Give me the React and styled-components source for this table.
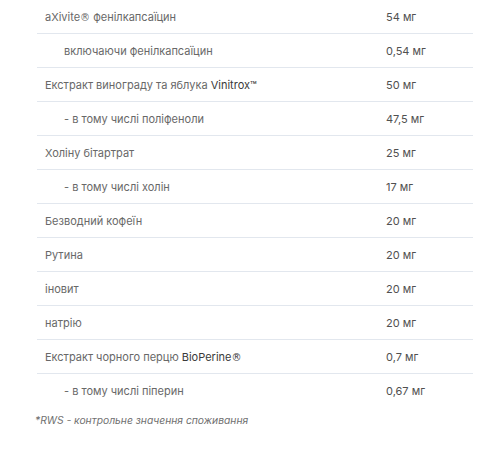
import styled, { createGlobalStyle } from "styled-components";

const GlobalStyle = createGlobalStyle`
  body {
    margin: 0;
    background: #fff;
    font-family: Inter, Roboto, "Liberation Sans", sans-serif;
  }
`;

const Wrapper = styled.div`
  width: 500px;
  height: 450px;
  padding: 0 27px 0 35px;
  box-sizing: border-box;
`;

const Table = styled.div`
  display: flex;
  flex-direction: column;
  margin-left: 2px;
`;

const Row = styled.div`
  display: grid;
  grid-template-columns: 1fr 87px;
  align-items: center;
  height: 33px;
  border-bottom: 1px solid ${(p) => (p.last ? "transparent" : "#e2e7ee")};
`;

const Name = styled.span`
  padding-left: ${(p) => (p.sub ? 27 : 8)}px;
  font-size: 11px;
  color: #686868;
  white-space: nowrap;
`;

const Brand = styled.span`
  color: #3a3a3a;
`;

const Reg = styled.span`
  font-family: "DejaVu Sans", sans-serif;
  font-size: 10px;
`;

const Amount = styled.span`
  font-size: 11px;
  color: #505050;
`;

const Note = styled.p`
  margin: 6px 0 0;
  font-size: 10.3px;
  font-style: italic;
  color: #707070;
`;

const rows = [
  { name: "aXivite", reg: true, rest: " фенілкапсаїцин", amount: "54 мг" },
  { name: "включаючи фенілкапсаїцин", amount: "0,54 мг", sub: true },
  { name: "Екстракт винограду та яблука ", brand: "Vinitrox™", amount: "50 мг" },
  { name: "- в тому числі поліфеноли", amount: "47,5 мг", sub: true },
  { name: "Холіну бітартрат", amount: "25 мг" },
  { name: "- в тому числі холін", amount: "17 мг", sub: true },
  { name: "Безводний кофеїн", amount: "20 мг" },
  { name: "Рутина", amount: "20 мг" },
  { name: "іновит", amount: "20 мг" },
  { name: "натрію", amount: "20 мг" },
  { name: "Екстракт чорного перцю ", brand: "BioPerine", brandReg: true, amount: "0,7 мг" },
  { name: "- в тому числі піперин", amount: "0,67 мг", sub: true },
];

export default function App() {
  return (
    <Wrapper>
      <GlobalStyle />
      <Table>
        {rows.map((r, i) => (
          <Row key={i} last={i === rows.length - 1}>
            <Name sub={r.sub}>
              {r.name}
              {r.reg && <Reg>®</Reg>}
              {r.rest}
              {r.brand && (
                <Brand>
                  {r.brand}
                  {r.brandReg && <Reg>®</Reg>}
                </Brand>
              )}
            </Name>
            <Amount>{r.amount}</Amount>
          </Row>
        ))}
      </Table>
      <Note>*RWS - контрольне значення споживання</Note>
    </Wrapper>
  );
}
